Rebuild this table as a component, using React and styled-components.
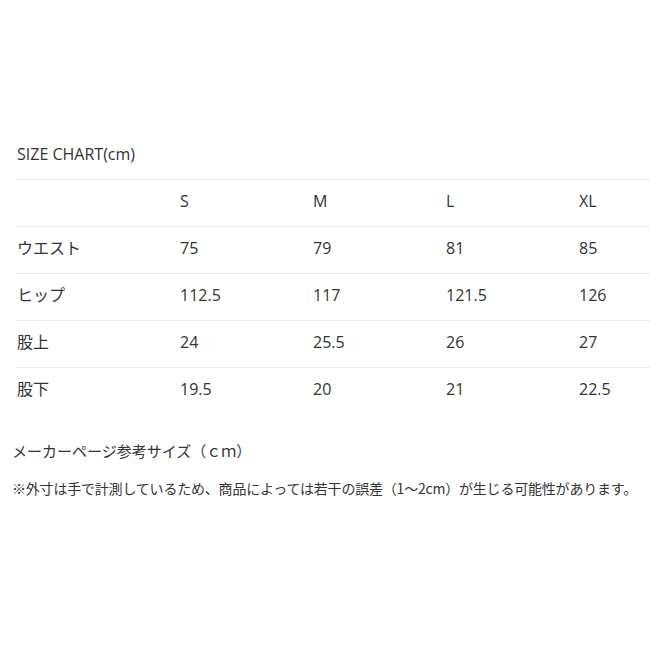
import React from "react";
import styled, { createGlobalStyle } from "styled-components";

const Global = createGlobalStyle`
  html, body { margin: 0; padding: 0; background: #fff; overflow: hidden; }
  body { font-family: "Open Sans", "Noto Sans CJK JP", sans-serif; color: #333; }
`;

const Page = styled.div`
  width: 650px;
  height: 650px;
  overflow: hidden;
  padding-top: 142px;
  box-sizing: border-box;
`;

const Section = styled.section`
  padding-left: 16px;
`;

const Title = styled.div`
  font-size: 16px;
  line-height: 24px;
  padding-left: 1px;
  height: 37px;
  color: #333;
`;

const Table = styled.div`
  width: 700px;
  display: flex;
  flex-direction: column;
`;

const Row = styled.div`
  display: grid;
  grid-template-columns: 164px repeat(4, 133px);
  height: 46px;
  align-items: center;
  border-top: 1px solid #ebebeb;
`;

const Cell = styled.div`
  font-size: 16px;
  line-height: 20px;
  padding-left: ${(p) => (p.$label ? "1px" : "0")};
  padding-bottom: 4px;
  color: #333;
`;

const Notes = styled.div`
  padding-left: 12px;
  padding-top: 26px;
  font-family: "Noto Sans CJK JP", sans-serif;
  color: #333;
`;

const Heading = styled.div`
  font-size: 15px;
  line-height: 22px;
`;

const Note = styled.div`
  margin-top: 16px;
  font-size: 14px;
  line-height: 20px;
  letter-spacing: -0.2px;
`;

const sizes = ["S", "M", "L", "XL"];
const rows = [
  ["ウエスト", "75", "79", "81", "85"],
  ["ヒップ", "112.5", "117", "121.5", "126"],
  ["股上", "24", "25.5", "26", "27"],
  ["股下", "19.5", "20", "21", "22.5"],
];

export default function App() {
  return (
    <Page>
      <Global />
      <Section>
        <Title>SIZE CHART(cm)</Title>
        <Table>
          <Row>
            <Cell $label />
            {sizes.map((s) => (
              <Cell key={s}>{s}</Cell>
            ))}
          </Row>
          {rows.map((r) => (
            <Row key={r[0]}>
              {r.map((v, i) => (
                <Cell key={i} $label={i === 0}>
                  {v}
                </Cell>
              ))}
            </Row>
          ))}
        </Table>
      </Section>
      <Notes>
        <Heading>メーカーページ参考サイズ（ｃｍ）</Heading>
        <Note>
          ※外寸は手で計測しているため、商品によっては若干の誤差（1〜2cm）が生じる可能性があります。
        </Note>
      </Notes>
    </Page>
  );
}
